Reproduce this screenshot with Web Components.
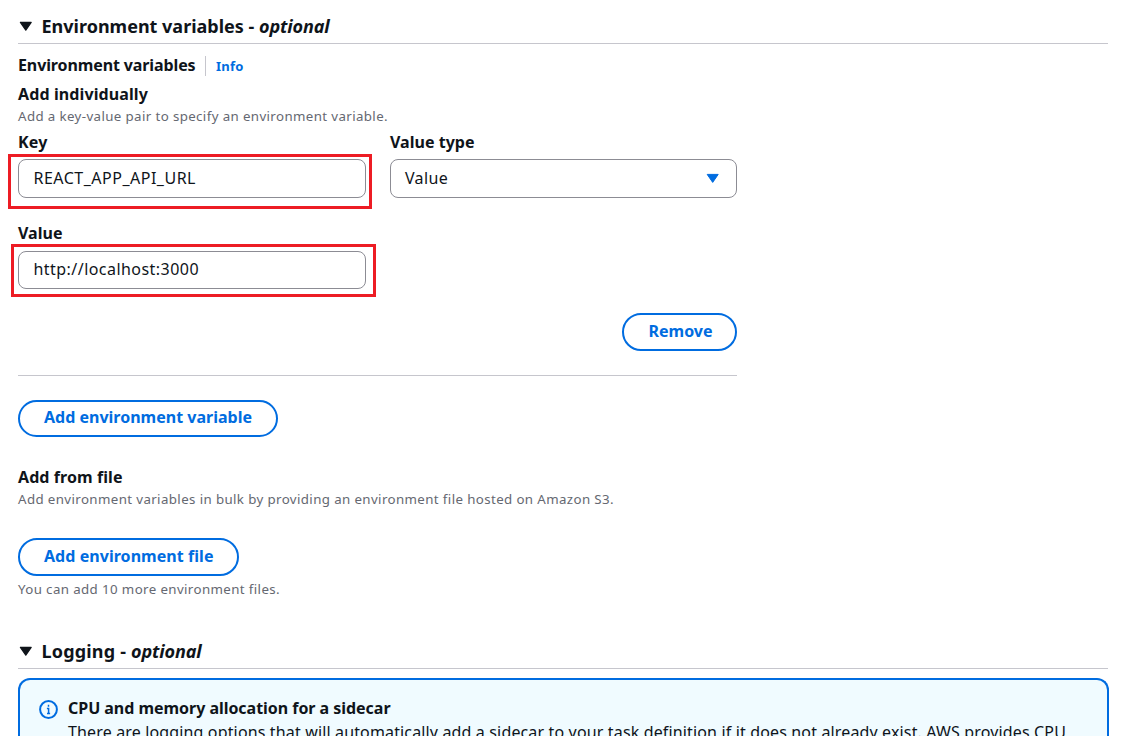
<!DOCTYPE html>
<html lang="en">
<head>
<meta charset="utf-8">
<title>Environment variables</title>
<style>
body{margin:0;background:#fff;height:736px;overflow:hidden;font-family:"Noto Sans","Open Sans",sans-serif;font-size:16px;line-height:22px;color:#0f141a}
</style>
</head>
<body>
<env-page></env-page>
<script>
const define=(name,html,setup)=>customElements.define(name,class extends HTMLElement{
  connectedCallback(){
    if(this.shadowRoot)return;
    const t=document.createElement('template');t.innerHTML=html;
    this.attachShadow({mode:'open'}).append(t.content.cloneNode(true));
    if(setup)setup(this,this.shadowRoot);
  }
});

/* A single line of text whose tracking is adjusted to a given advance width. */
define('fit-text','<style>:host{display:inline-block;white-space:pre;vertical-align:top}</style><span><slot></slot></span>',(el,root)=>{
  const s=root.querySelector('span'),n=el.textContent.length,w=+el.getAttribute('w');
  s.style.letterSpacing=((w-s.getBoundingClientRect().width)/n).toFixed(4)+'px';
});

define('section-header',`<style>
:host{display:flex;box-sizing:border-box;height:30px;padding-left:.5px;border-bottom:1px solid #c6c6cd;font-size:18px;line-height:24px;font-weight:700}
svg{flex:none;width:14px;height:14px;margin:6px 9px 0 0}
</style><svg viewBox="0 0 14 14"><path d="M1.4 2.3h10.8L6.8 10.2z" fill="#0f141a" stroke="#0f141a" stroke-width="1.2" stroke-linejoin="round"/></svg><slot></slot>`);

define('field-box',`<style>
:host{display:block;position:relative}
.label{font-weight:700;height:22px;display:block}
.box{box-sizing:border-box;display:flex;justify-content:space-between;height:var(--h,39px);margin-top:var(--gap,6px);padding:var(--top,7px) 16.5px 0 var(--inset,14.5px);border:1px solid #8c8c94;border-radius:8px}
svg{width:14px;height:12px;margin-top:5px}
:host(:not([select])) svg{display:none}
</style><slot class="label" name="label"></slot><div class="box"><slot></slot><svg viewBox="0 0 14 12"><path d="M1.2 2.4h11L6.7 10.4z" fill="#006ce0" stroke="#006ce0" stroke-linejoin="round"/></svg></div><slot name="mark"></slot>`);

define('red-mark','<style>:host{position:absolute;box-sizing:border-box;border:3px solid #ed1c24;pointer-events:none}</style>');

define('pill-button',`<style>
:host{display:block;box-sizing:border-box;height:38px;border:2px solid #006ce0;border-radius:20px;padding:5px 0 0 24px;color:#006ce0;font-weight:700}
</style><slot></slot>`);

define('info-alert',`<style>
:host{display:flex;box-sizing:border-box;height:58px;border:2px solid #006ce0;border-bottom:0;border-radius:12px 12px 0 0;background:#f0fbff;padding:17px 18px 0 19px}
svg{width:19px;height:19px;margin:3px 10px 0 0;flex:none}
::slotted(*){flex:none}
::slotted([slot=title]){font-weight:700;height:24px}
.body{display:flex;flex-direction:column;align-items:flex-start}
</style><svg viewBox="0 0 19 19" fill="none" stroke="#006ce0" stroke-width="2"><circle cx="9.5" cy="9.5" r="8.4"/><path d="M9.5 4.7v2M7.9 8.4h1.7V14M8 13.5h3.1" stroke-width="1.5"/></svg><div class="body"><slot name="title"></slot><slot></slot></div>`);

define('env-page',`<style>
:host{display:block;padding:14px 22px 0 18px}
.title{display:flex;margin-top:10px;font-weight:700}
.info{margin-left:9.5px;border-left:1px solid #c6c6cd;padding-left:10px;height:20px;margin-top:2px;color:#006ce0;font-size:13px;line-height:20px}
.strong{font-weight:700;height:22px}
.hint{font-size:13.3px;line-height:18px;height:18px;color:#656871}
.fields{display:grid;grid-template-columns:348px 347px;column-gap:24px;row-gap:24px;margin-top:6px}
.second{--gap:7px;--h:38px;--top:6px}
.select{--inset:14px}
.remove{width:719px;box-sizing:border-box;display:flex;justify-content:flex-end;margin-top:24px;padding-bottom:24px;border-bottom:1px solid #c6c6cd}
.remove pill-button{width:115px;padding-left:24.5px}
.add{width:260px;height:37px;margin-top:24px;padding-top:4px}
.file{width:221px;margin-top:30px}
.logging{margin-top:41px}
info-alert{margin-top:9px}
section-header{margin-right:1px}
i{font-style:italic}
</style>
<section-header><fit-text w="217.5">Environment variables - </fit-text><fit-text w="70.5"><i>optional</i></fit-text></section-header>
<div class="title"><fit-text w="177.5">Environment variables</fit-text><div class="info"><fit-text w="27.5">Info</fit-text></div></div>
<div class="strong" style="margin-top:7px"><fit-text w="130">Add individually</fit-text></div>
<div class="hint" style="margin-top:2px"><fit-text w="370">Add a key-value pair to specify an environment variable.</fit-text></div>
<div class="fields">
<field-box><fit-text slot="label" w="29.5">Key</fit-text><fit-text w="162.5">REACT_APP_API_URL</fit-text><red-mark slot="mark" style="left:-10px;top:23px;width:364px;height:55px"></red-mark></field-box>
<field-box select class="select"><fit-text slot="label" w="84.5">Value type</fit-text><fit-text w="43">Value</fit-text></field-box>
<field-box class="second"><fit-text slot="label" w="44.5">Value</fit-text><fit-text w="165.5">http://localhost:3000</fit-text><red-mark slot="mark" style="left:-7px;top:22px;width:365px;height:53px"></red-mark></field-box>
</div>
<div class="remove"><pill-button><fit-text w="64">Remove</fit-text></pill-button></div>
<pill-button class="add"><fit-text w="208">Add environment variable</fit-text></pill-button>
<div class="strong" style="margin-top:29px"><fit-text w="104.5">Add from file</fit-text></div>
<div class="hint" style="margin-top:2px"><fit-text w="596">Add environment variables in bulk by providing an environment file hosted on Amazon S3.</fit-text></div>
<pill-button class="file"><fit-text w="169.5">Add environment file</fit-text></pill-button>
<div class="hint" style="margin-top:4px"><fit-text w="262">You can add 10 more environment files.</fit-text></div>
<section-header class="logging"><fit-text w="89.5">Logging - </fit-text><fit-text w="70.5"><i>optional</i></fit-text></section-header>
<info-alert><fit-text slot="title" w="322.5">CPU and memory allocation for a sidecar</fit-text><fit-text w="998">There are logging options that will automatically add a sidecar to your task definition if it does not already exist. AWS provides CPU</fit-text></info-alert>`);
</script>
</body>
</html>
